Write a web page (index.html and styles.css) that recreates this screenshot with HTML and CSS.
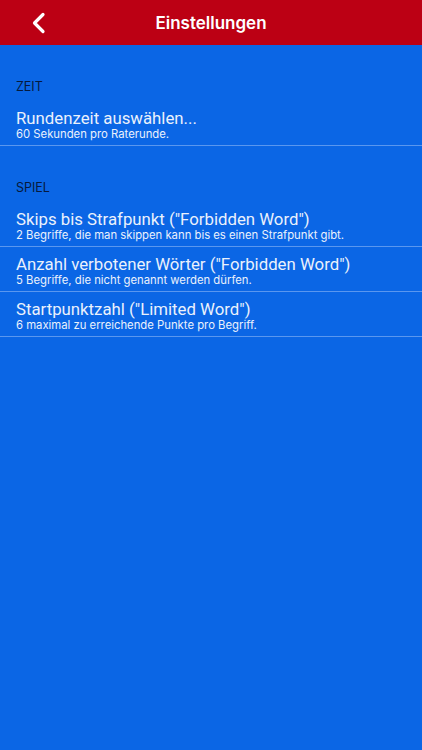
FILE: index.html
```html
<!DOCTYPE html>
<html>
<head>
<meta charset="utf-8">
<link rel="stylesheet" href="styles.css">
</head>
<body>
<div class="navbar">
  <div class="back">
    <svg width="14" height="22" viewBox="0 0 14 22"><path d="M11 2.5 L2.5 11 L11 19.5" fill="none" stroke="#fff" stroke-width="3.2" stroke-linecap="round" stroke-linejoin="round"/></svg>
  </div>
  <div class="title">Einstellungen</div>
</div>
<div class="content">
  <div class="section-header">ZEIT</div>
  <div class="row">
    <div class="row-title">Rundenzeit auswählen...</div>
    <div class="row-sub">60 Sekunden pro Raterunde.</div>
  </div>
  <div class="section-header">SPIEL</div>
  <div class="row">
    <div class="row-title">Skips bis Strafpunkt ("Forbidden Word")</div>
    <div class="row-sub">2 Begriffe, die man skippen kann bis es einen Strafpunkt gibt.</div>
  </div>
  <div class="row">
    <div class="row-title">Anzahl verbotener Wörter ("Forbidden Word")</div>
    <div class="row-sub">5 Begriffe, die nicht genannt werden dürfen.</div>
  </div>
  <div class="row">
    <div class="row-title">Startpunktzahl ("Limited Word")</div>
    <div class="row-sub">6 maximal zu erreichende Punkte pro Begriff.</div>
  </div>
</div>
</body>
</html>
```
FILE: styles.css
```css
html, body {
  margin: 0;
  padding: 0;
  height: 100%;
}
body {
  background: #0b66e5;
  font-family: Roboto, "Noto Sans", sans-serif;
  width: 422px;
  height: 750px;
  overflow: hidden;
}
.navbar {
  position: relative;
  height: 45px;
  background: #bc0014;
  display: flex;
  align-items: center;
  justify-content: center;
}
.back {
  position: absolute;
  left: 32px;
  top: 12px;
  display: flex;
}
.title {
  font-family: Inter, Roboto, sans-serif;
  color: #fff;
  font-size: 17px;
  font-weight: 600;
}
.content {
  display: flex;
  flex-direction: column;
}
.section-header {
  font-family: Inter, Roboto, sans-serif;
  padding: 35px 16px 7px;
  line-height: 14px;
  font-size: 12.5px;
  color: #061a3c;
}
.row {
  padding: 7px 16px 4px;
  border-bottom: 1px solid #5a97ef;
  color: #eaf1fc;
}
.row-title {
  font-size: 16.8px;
  line-height: 20px;
}
.row-sub {
  font-family: Inter, Roboto, sans-serif;
  font-size: 11.3px;
  line-height: 13px;
}
```
